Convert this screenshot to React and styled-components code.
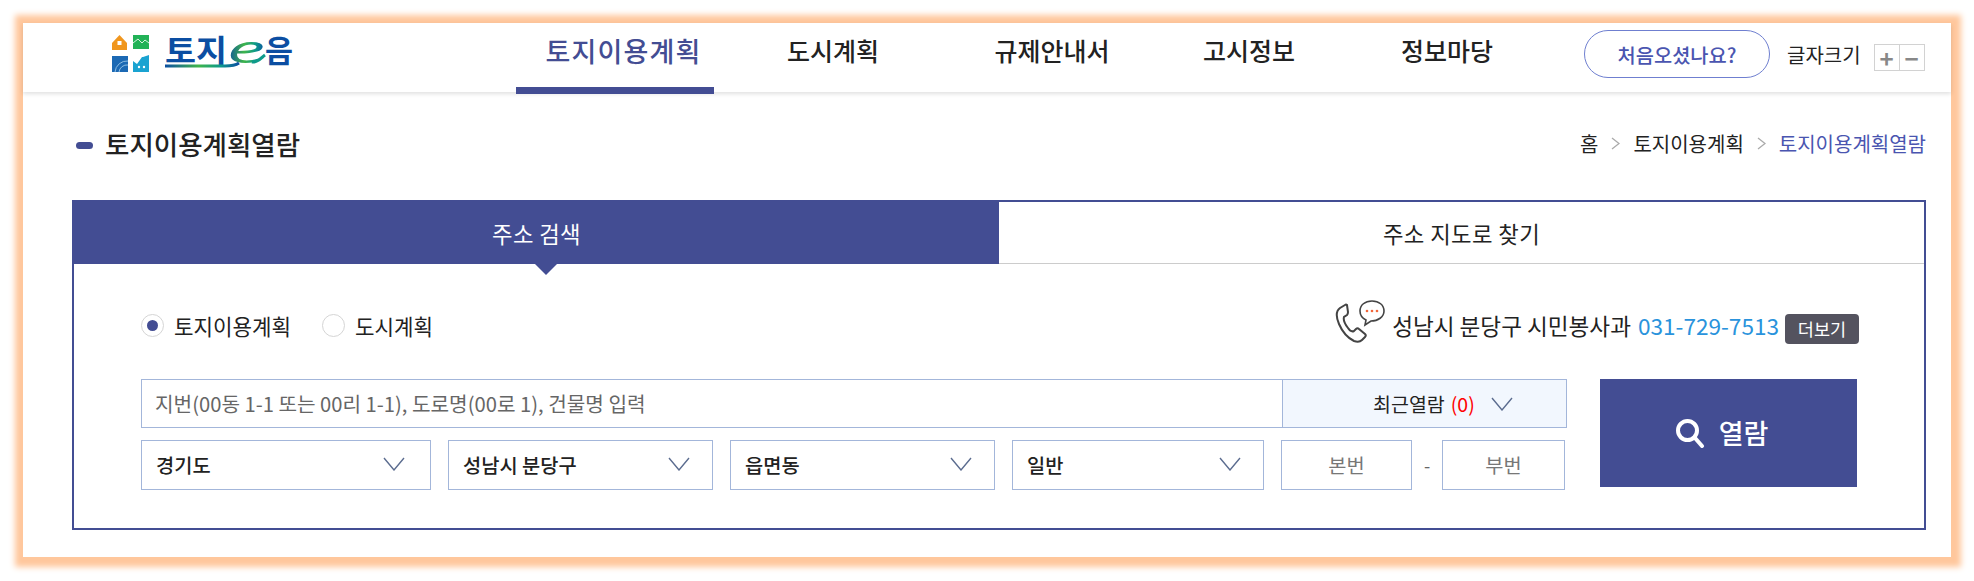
import React from "react";
import styled, { createGlobalStyle } from "styled-components";

const GlobalStyle = createGlobalStyle`
	html, body {
		margin: 0;
		padding: 0;
		background: #fff;
		overflow: hidden;
	}

	body, button {
		font-family: "Noto Sans CJK KR", "Noto Sans", sans-serif;
		color: #222;
	}
`;

const navy = "#434d93";
const fieldBorder = "#a3b6da";

const Frame = styled.div`
	width: 1928px;
	height: 534px;
	margin: 23px;
	background: #fff;
	box-shadow: 1px 1px 6px 9px #ffc79c;
	display: flex;
	flex-direction: column;
`;

const Header = styled.header`
	height: 69px;
	flex: none;
	display: flex;
	align-items: flex-start;
	padding-left: 88px;
	box-shadow: 0 2px 4px rgba(0, 0, 0, 0.12);
`;

const LogoBox = styled.svg`
	width: 182px;
	height: 60px;
	flex: none;
	display: block;
`;

const Nav = styled.nav`
	display: flex;
	margin-left: 223px;
`;

const NavItem = styled.a`
	width: ${(p) => p.$w}px;
	height: 71px;
	box-sizing: border-box;
	padding-left: ${(p) => (p.$active ? 17 : 0)}px;
	line-height: ${(p) => (p.$active ? 55 : 54)}px;
	text-align: center;
	font-size: ${(p) => (p.$active ? 27 : 25)}px;
	white-space: nowrap;
	letter-spacing: ${(p) => (p.$active ? "1.2px" : "0")};
	color: ${(p) => (p.$active ? navy : "#222")};
	border-bottom: ${(p) => (p.$active ? `7px solid ${navy}` : "none")};
	font-weight: 500;
`;

const Help = styled.button`
	width: 186px;
	height: 48px;
	margin: 7px 0 0 36px;
	flex: none;
	background: #fff;
	border: 1px solid #6f7fd0;
	border-radius: 24px;
	color: #4a55b0;
	font-size: 19.8px;
	font-weight: 500;
	padding: 0;
`;

const FontLabel = styled.span`
	margin: 14px 0 0 17px;
	font-size: 20px;
	line-height: 36px;
	white-space: nowrap;
`;

const SizeBox = styled.div`
	display: flex;
	margin: 21px 0 0 13px;
	border: 1px solid #d2d2d2;
	height: 27px;
	box-sizing: border-box;
`;

const SizeButton = styled.span`
	width: 24px;
	display: flex;
	align-items: center;
	justify-content: center;
	color: #888;
	font-size: 24px;
	font-weight: 700;
	line-height: 1;
	& + & {
		border-left: 1px solid #d2d2d2;
	}
`;

const Main = styled.main`
	padding: 0 25px 0 49px;
`;

const TitleRow = styled.div`
	height: 108px;
	display: flex;
	align-items: center;
	justify-content: space-between;
`;

const PageTitle = styled.h1`
	margin: -5px 0 0;
	display: flex;
	align-items: center;
	font-size: 26.5px;
	font-weight: 500;
	&::before {
		content: "";
		width: 17px;
		height: 7px;
		margin: 4px 12px 0 4px;
		border-radius: 4px;
		background: ${navy};
	}
`;

const Crumbs = styled.div`
	display: flex;
	align-items: center;
	font-size: 20px;
	margin-top: -5px;
`;

const Crumb = styled.span`
	color: ${(p) => (p.$current ? "#4a55b0" : "#222")};
`;

const CrumbArrow = styled.svg`
	width: 9px;
	height: 13px;
	margin: 0 13px;
	fill: none;
	stroke: #aaa;
	stroke-width: 1.3;
`;

const Panel = styled.section`
	height: 330px;
	box-sizing: border-box;
	border: 2px solid ${navy};
`;

const Tabs = styled.div`
	display: flex;
	height: 62px;
`;

const Tab = styled.div`
	flex: ${(p) => (p.$active ? "0 0 925px" : "1")};
	position: relative;
	display: flex;
	align-items: center;
	justify-content: center;
	font-size: 22.3px;
	letter-spacing: 0.4px;
	background: ${(p) => (p.$active ? navy : "#fff")};
	color: ${(p) => (p.$active ? "#fff" : "#222")};
	border-bottom: 1px solid ${(p) => (p.$active ? navy : "#ccc")};
	${(p) =>
		p.$active &&
		`&::after {
			content: "";
			position: absolute;
			left: 460px;
			top: 100%;
			border-left: 12px solid transparent;
			border-right: 12px solid transparent;
			border-top: 12px solid ${navy};
		}`}
`;

const Body = styled.div`
	padding: 38px 67px 0;
`;

const InfoRow = styled.div`
	height: 46px;
	margin-bottom: 31px;
	display: flex;
	align-items: center;
	justify-content: space-between;
`;

const Radios = styled.div`
	display: flex;
	align-items: center;
	font-size: 21.2px;
`;

const Radio = styled.span`
	width: 23px;
	height: 23px;
	box-sizing: border-box;
	border-radius: 50%;
	border: 1px solid #d5d5d5;
	margin: 0 10px 0 ${(p) => (p.$first ? 0 : 31)}px;
	display: flex;
	align-items: center;
	justify-content: center;
	&::after {
		content: "";
		width: 11px;
		height: 11px;
		border-radius: 50%;
		background: ${(p) => (p.$on ? navy : "transparent")};
	}
`;

const Contact = styled.div`
	display: flex;
	align-items: center;
	font-size: 22.6px;
	white-space: nowrap;
	margin-right: -2px;
`;

const PhoneIcon = styled.svg`
	width: 50px;
	height: 44px;
	margin: -6px 7px 0 0;
	flex: none;
`;

const PhoneNumber = styled.span`
	color: #2a93dc;
	margin-left: 7px;
`;

const MoreBadge = styled.span`
	width: 74px;
	height: 30px;
	margin: 7px 0 0 6px;
	border-radius: 4px;
	background: #54535f;
	color: #fff;
	font-size: 17.5px;
	display: flex;
	align-items: center;
	justify-content: center;
`;

const Form = styled.div`
	display: flex;
	align-items: flex-start;
	gap: 33px;
`;

const Fields = styled.div`
	width: 1426px;
	display: flex;
	flex-direction: column;
	gap: 12px;
`;

const SearchRow = styled.div`
	display: flex;
	height: 49px;
`;

const SearchInput = styled.div`
	flex: 1;
	box-sizing: border-box;
	border: 1px solid ${fieldBorder};
	border-right: none;
	padding: 0 13px;
	display: flex;
	align-items: center;
	font-size: 20.2px;
	color: #666;
`;

const Recent = styled.div`
	width: 285px;
	box-sizing: border-box;
	border: 1px solid ${fieldBorder};
	background: #f2f7fe;
	padding-left: 90px;
	display: flex;
	align-items: center;
	font-size: 19.5px;
`;

const Count = styled.span`
	color: #f00;
	margin: 0 auto 0 6px;
`;

const Chevron = styled.svg`
	width: 22px;
	height: 14px;
	fill: none;
	stroke: #5b6c8f;
	stroke-width: 1.4;
	flex: none;
	margin-right: ${(p) => p.$mr}px;
`;

const SelectRow = styled.div`
	display: flex;
	height: 50px;
	gap: 17px;
`;

const Select = styled.div`
	width: ${(p) => p.$w}px;
	box-sizing: border-box;
	border: 1px solid ${fieldBorder};
	padding: 0 0 2px 14px;
	display: flex;
	align-items: center;
	justify-content: space-between;
	font-size: 19.8px;
	font-weight: 500;
`;

const NumberField = styled.div`
	width: ${(p) => p.$w}px;
	box-sizing: border-box;
	border: 1px solid ${fieldBorder};
	padding-bottom: 2px;
	display: flex;
	align-items: center;
	justify-content: center;
	font-size: 19.8px;
	color: #777;
`;

const Dash = styled.span`
	width: 30px;
	margin: 0 -17px;
	text-align: center;
	align-self: center;
	color: #666;
	font-size: 18px;
`;

const SearchButton = styled.button`
	width: 257px;
	height: 108px;
	flex: none;
	border: none;
	background: ${navy};
	color: #fff;
	font-size: 27px;
	font-weight: 500;
	display: flex;
	align-items: center;
	justify-content: center;
	gap: 14px;
	padding: 0 14px 1px 0;
`;

const Logo = () => (
	<LogoBox viewBox="0 -11 182 60">
		<defs>
			<linearGradient id="swoosh" x1="0" x2="1" y1="0" y2="0">
				<stop offset="0" stopColor="#0b4ea2" />
				<stop offset="0.45" stopColor="#3fb54a" />
				<stop offset="0.75" stopColor="#0e9a8a" />
				<stop offset="1" stopColor="#0b4ea2" />
			</linearGradient>
		</defs>
		<path d="M1 9 8.5 1 16 9v7H1z" fill="#f0961e" />
		<rect x="6.5" y="7" width="4" height="4" fill="#fff" />
		<rect x="22" y="1" width="16" height="14" fill="#22b257" />
		<path d="M22 9l5-4 4 4 3-3 4 3" fill="none" stroke="#d8f3df" strokeWidth="1" />
		<rect x="1" y="22" width="16" height="16" fill="#1c69b4" />
		<path d="M17 27a12 12 0 0 0-13 11M17 31a8 8 0 0 0-9 7" fill="none" stroke="#8ebee4" strokeWidth="1" />
		<path d="M22 38V27l4 3 5-7 1 0 0 0 6-2v17z" fill="#1aa3d1" />
		<circle cx="28" cy="33" r="1.2" fill="#fff" />
		<circle cx="33" cy="33" r="1.2" fill="#fff" />
		<text x="54" y="28" fontSize="31" fontWeight="700" fill="#0b4ea2" textLength="62" lengthAdjust="spacingAndGlyphs" fontFamily="'Noto Sans CJK KR', sans-serif">토지</text>
		<text x="116" y="29" fontSize="38" fontWeight="400" fontStyle="italic" fill="url(#swoosh)" textLength="38" lengthAdjust="spacingAndGlyphs" fontFamily="'Open Sans', sans-serif">e</text>
		<text x="154" y="28" fontSize="31" fontWeight="700" fill="#0b4ea2" textLength="28" lengthAdjust="spacingAndGlyphs" fontFamily="'Noto Sans CJK KR', sans-serif">음</text>
		<path d="M54 32H114c8 0 11-1 14-3" fill="none" stroke="url(#swoosh)" strokeWidth="3" />
		<path d="M141 28c5 1 9-4 13-7" fill="none" stroke="#0e9a8a" strokeWidth="3" />
	</LogoBox>
);

const ChevronDown = ({ mr }) => (
	<Chevron viewBox="0 0 22 14" $mr={mr}>
		<polyline points="1,1 11,13 21,1" />
	</Chevron>
);

const Arrow = () => (
	<CrumbArrow viewBox="0 0 9 13">
		<polyline points="1,1 8,6.5 1,12" />
	</CrumbArrow>
);

const Phone = () => (
	<PhoneIcon viewBox="0 0 50 44" fill="none">
		<path
			d="M10 5 5 8C1 11 1 17 4 24c3 7 9 14 15 17 3 1 6 1 8-1l3-3c1-1 1-2 0-3l-6-5c-1-1-2-1-3 0l-2 2c-2 1-4 0-6-3-3-4-5-8-4-11l3-2c1-1 1-2 1-3l-1-7c-1-1-1-1-2 0z"
			stroke="#444"
			strokeWidth="2"
		/>
		<path
			d="M37 1c-7 0-12 4-12 10 0 4 2 7 6 9l-1 5 6-4c7 0 13-4 13-10S44 1 37 1z"
			stroke="#444"
			strokeWidth="1.6"
		/>
		<circle cx="32" cy="11" r="1.3" fill="#f2673a" />
		<circle cx="37" cy="11" r="1.3" fill="#f2673a" />
		<circle cx="42" cy="11" r="1.3" fill="#f2673a" />
	</PhoneIcon>
);

const SearchIcon = () => (
	<svg width="30" height="30" viewBox="0 0 30 30" fill="none" stroke="#fff" strokeWidth="4" strokeLinecap="round">
		<circle cx="12.5" cy="12.5" r="9.5" />
		<line x1="20" y1="20" x2="27" y2="28" />
	</svg>
);

const App = () => (
	<>
		<GlobalStyle />
		<Frame>
			<Header>
				<Logo />
				<Nav>
					<NavItem $w={198} $active>토지이용계획</NavItem>
					<NavItem $w={238}>도시계획</NavItem>
					<NavItem $w={200}>규제안내서</NavItem>
					<NavItem $w={194}>고시정보</NavItem>
					<NavItem $w={202}>정보마당</NavItem>
				</Nav>
				<Help>처음오셨나요?</Help>
				<FontLabel>글자크기</FontLabel>
				<SizeBox>
					<SizeButton>+</SizeButton>
					<SizeButton>−</SizeButton>
				</SizeBox>
			</Header>
			<Main>
				<TitleRow>
					<PageTitle>토지이용계획열람</PageTitle>
					<Crumbs>
						<Crumb>홈</Crumb>
						<Arrow />
						<Crumb>토지이용계획</Crumb>
						<Arrow />
						<Crumb $current>토지이용계획열람</Crumb>
					</Crumbs>
				</TitleRow>
				<Panel>
					<Tabs>
						<Tab $active>주소 검색</Tab>
						<Tab>주소 지도로 찾기</Tab>
					</Tabs>
					<Body>
						<InfoRow>
							<Radios>
								<Radio $first $on />
								토지이용계획
								<Radio />
								도시계획
							</Radios>
							<Contact>
								<Phone />
								성남시 분당구 시민봉사과
								<PhoneNumber>031-729-7513</PhoneNumber>
								<MoreBadge>더보기</MoreBadge>
							</Contact>
						</InfoRow>
						<Form>
							<Fields>
								<SearchRow>
									<SearchInput>지번(00동 1-1 또는 00리 1-1), 도로명(00로 1), 건물명 입력</SearchInput>
									<Recent>
										최근열람
										<Count>(0)</Count>
										<ChevronDown mr={53} />
									</Recent>
								</SearchRow>
								<SelectRow>
									<Select $w={290}>경기도<ChevronDown mr={25} /></Select>
									<Select $w={265}>성남시 분당구<ChevronDown mr={22} /></Select>
									<Select $w={265}>읍면동<ChevronDown mr={22} /></Select>
									<Select $w={252}>일반<ChevronDown mr={22} /></Select>
									<NumberField $w={131}>본번</NumberField>
									<Dash>-</Dash>
									<NumberField $w={123}>부번</NumberField>
								</SelectRow>
							</Fields>
							<SearchButton>
								<SearchIcon />
								열람
							</SearchButton>
						</Form>
					</Body>
				</Panel>
			</Main>
		</Frame>
	</>
);

export default App;
